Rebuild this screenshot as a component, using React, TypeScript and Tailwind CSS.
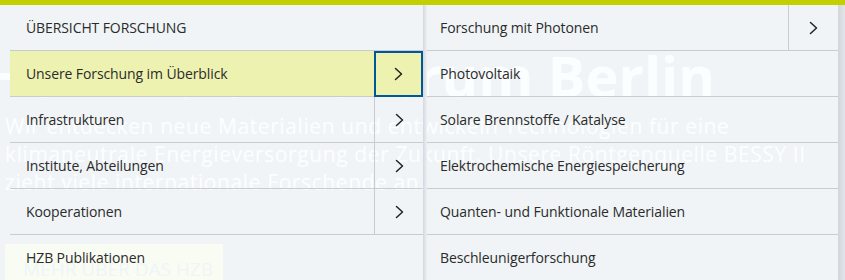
import React from 'react';

interface MenuItem {
  label: string;
  sub?: boolean;
  active?: boolean;
}

const leftItems: MenuItem[] = [
  { label: 'ÜBERSICHT FORSCHUNG' },
  { label: 'Unsere Forschung im Überblick', sub: true, active: true },
  { label: 'Infrastrukturen', sub: true },
  { label: 'Institute, Abteilungen', sub: true },
  { label: 'Kooperationen', sub: true },
  { label: 'HZB Publikationen' },
];

const rightItems: MenuItem[] = [
  { label: 'Forschung mit Photonen', sub: true },
  { label: 'Photovoltaik' },
  { label: 'Solare Brennstoffe / Katalyse' },
  { label: 'Elektrochemische Energiespeicherung' },
  { label: 'Quanten- und Funktionale Materialien' },
  { label: 'Beschleunigerforschung' },
];

const Chevron = () => (
  <svg width="9" height="14" viewBox="0 0 9 14" fill="none">
    <path d="M1.5 1.5 L7.5 7 L1.5 12.5" stroke="#222" strokeWidth="1.5" strokeLinecap="round" strokeLinejoin="round" />
  </svg>
);

const Row = ({ item, pad, cellW }: { item: MenuItem; pad: string; cellW: string }) => (
  <div className={`flex h-[46px] shrink-0 items-stretch border-b border-[#c8ccd1] ${item.active ? 'bg-[#edf2b1]' : ''}`}>
    <div className={`flex flex-1 items-center ${pad} text-[14px] tracking-[-0.1px] text-[#2b2b2b]`}>{item.label}</div>
    {item.sub &&
      (item.active ? (
        <button className={`${cellW} flex h-[46px] shrink-0 items-center justify-center self-start border-2 border-[#00579c]`}>
          <Chevron />
        </button>
      ) : (
        <button className={`${cellW} flex shrink-0 items-center justify-center border-l border-[#c8ccd1]`}>
          <Chevron />
        </button>
      ))}
  </div>
);

export default function App() {
  return (
    <div className="relative h-[280px] w-[845px] overflow-hidden bg-[#2a3a50] font-['Open_Sans',sans-serif]">
      {/* Hero behind the menu */}
      <div className="flex flex-col pl-[5px] pt-[47px] text-white">
        <div className="flex w-[710px] justify-end">
          <h1 className="whitespace-nowrap text-[56px] font-bold leading-[56px]">Helmholtz-Zentrum Berlin</h1>
        </div>
        <p className="mt-[9px] whitespace-nowrap text-[21px] leading-[28px] tracking-[0.6px]">
          Wir entdecken neue Materialien und entwickeln Technologien für eine
          <br />
          klimaneutrale Energieversorgung der Zukunft. Unsere Röntgenquelle BESSY II
          <br />
          zieht viele internationale Forschende an.
        </p>
        <div className="mt-[48px] flex h-[50px] w-[218px] items-center bg-[#c3cf00] pl-[18px] text-[19px] uppercase whitespace-nowrap text-[#003f70]">
          Mehr über das HZB
        </div>
      </div>

      {/* Mega menu overlay */}
      <div className="absolute inset-0 flex flex-col">
        <div className="h-[5px] shrink-0 bg-[#c3cf00]" />
        <div className="flex flex-1">
          <div className="flex w-[423px] shrink-0 flex-col bg-[#fbfeff]/95 pl-[10px]">
            {leftItems.map((item) => (
              <Row key={item.label} item={item} pad="pl-[16px]" cellW="w-[49px]" />
            ))}
          </div>
          <div className="w-[4px] shrink-0 bg-gradient-to-r from-[#d4d8dd] to-[#edf1f5]" />
          <div className="flex w-[411px] shrink-0 flex-col bg-[#fbfeff]/95">
            {rightItems.map((item) => (
              <Row key={item.label} item={item} pad="pl-[13px]" cellW="w-[50px]" />
            ))}
          </div>
          <div className="flex-1 bg-gradient-to-r from-[#d2d5da] to-[#e2e5e9]" />
        </div>
      </div>
    </div>
  );
}
